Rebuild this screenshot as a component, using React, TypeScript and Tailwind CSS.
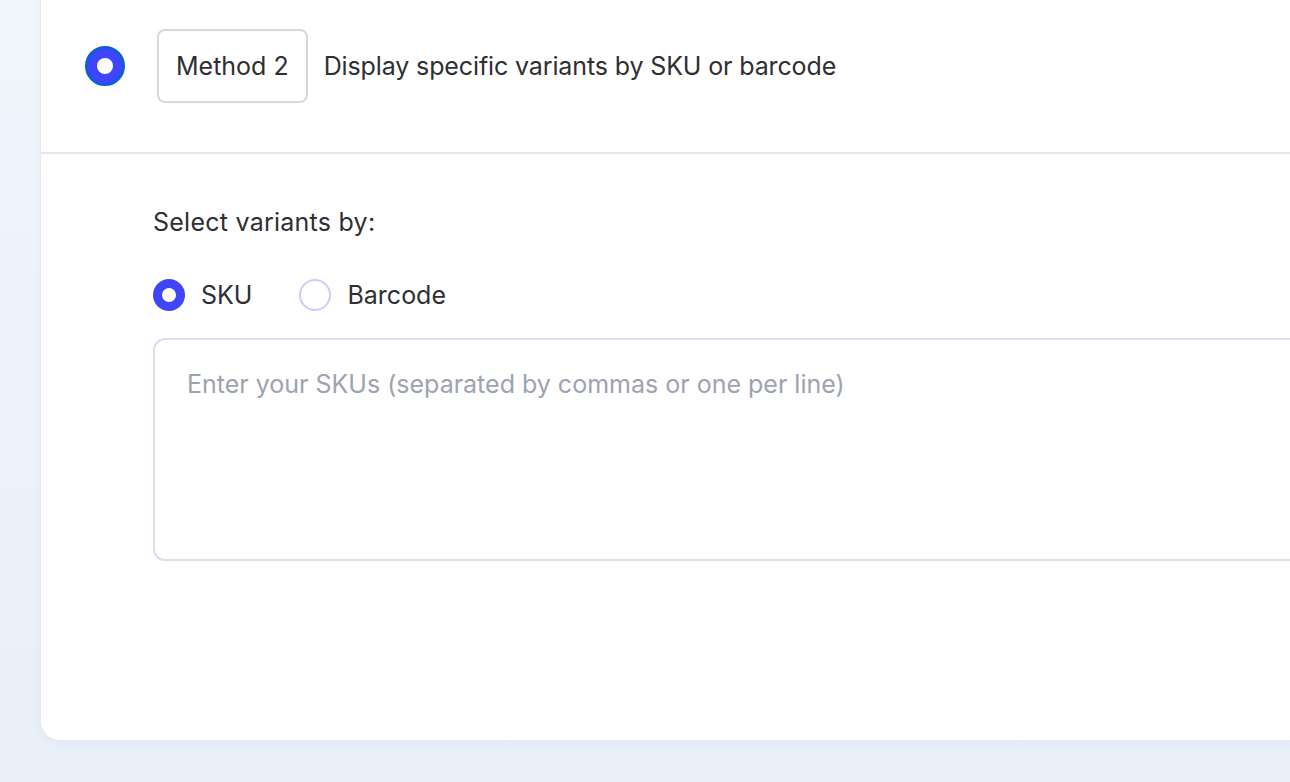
export default function App() {
  return (
    <div
      className="h-[782px] w-[1290px] overflow-hidden bg-gradient-to-b from-[#f1f5fc] to-[#e9eff9] pl-[40px] pb-[41px]"
      style={{ fontFamily: 'Inter, "Noto Sans", sans-serif' }}
    >
      <div className="flex h-full w-[1290px] flex-col rounded-bl-[20px] border-b border-l border-[#e6e9ee] bg-white shadow-[0_2px_8px_rgba(30,60,120,0.04)]">
        {/* method row */}
        <div className="flex items-center border-b-2 border-[#e6e7eb] pl-[44px] pt-[29px] pb-[49px]">
          <span className="flex h-[40px] w-[40px] items-center justify-center rounded-full border-[3px] border-[#0f5ed6] bg-[#3f45fe]">
            <span className="h-[16px] w-[16px] rounded-full bg-white" />
          </span>
          <span className="ml-[32px] flex h-[74px] items-center rounded-[8px] border-2 border-[#d5d8de] px-[17px] text-[25px] leading-[32px] text-[#2f2f33]">
            Method 2
          </span>
          <span className="ml-[16px] text-[25px] leading-[32px] tracking-[-0.005em] text-[#2f2f33]">
            Display specific variants by SKU or barcode
          </span>
        </div>

        {/* variant selection */}
        <div className="flex flex-col pl-[112px] pt-[52px]">
          <p className="text-[25px] leading-[32px] tracking-[0.01em] text-[#2f2f33]">Select variants by:</p>
          <div className="mt-[41px] flex items-center">
            <span className="flex h-[32px] w-[32px] items-center justify-center rounded-full bg-[#4046f8]">
              <span className="h-[14px] w-[14px] rounded-full bg-white" />
            </span>
            <span className="ml-[16px] text-[25px] leading-[32px] text-[#2f2f33]">SKU</span>
            <span className="ml-[47px] h-[32px] w-[32px] rounded-full border-2 border-[#cacdf8] bg-white" />
            <span className="ml-[16px] text-[25px] leading-[32px] text-[#2f2f33]">Barcode</span>
          </div>
          <textarea
            className="mt-[27px] h-[223px] w-[1200px] resize-none rounded-[12px] border-2 border-[#dfdcee] px-[32px] pt-[28px] text-[25px] leading-[32px] text-[#2f2f33] outline-none placeholder:text-[#9ea3b0]"
            placeholder="Enter your SKUs (separated by commas or one per line)"
          />
        </div>
      </div>
    </div>
  );
}
